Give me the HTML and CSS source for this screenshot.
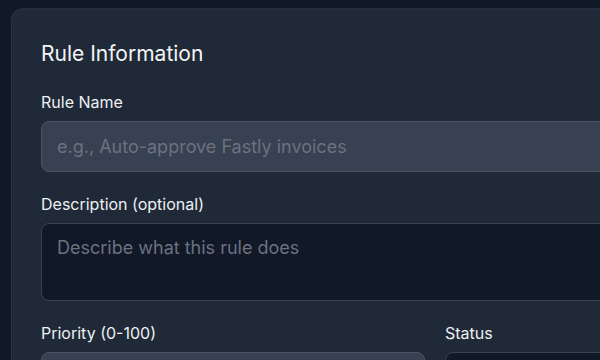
FILE: index.html
```html
<!DOCTYPE html>
<html>

<head>
    <title>Rule editor</title>
    <link rel="stylesheet" href="styles.css">
</head>

<body>
    <div class="card">
        <h2 class="card-title">Rule Information</h2>

        <div class="field">
            <label for="rule-name">Rule Name</label>
            <input class="text-input" type="text" id="rule-name" placeholder="e.g., Auto-approve Fastly invoices">
        </div>

        <div class="field">
            <label for="rule-desc">Description (optional)</label>
            <textarea class="text-area" id="rule-desc" placeholder="Describe what this rule does"></textarea>
        </div>

        <div class="row">
            <div class="field">
                <label for="priority">Priority (0-100)</label>
                <input class="text-input" type="number" id="priority">
            </div>
            <div class="field">
                <label for="status">Status</label>
                <select class="select-input" id="status"></select>
            </div>
        </div>
    </div>
</body>

</html>
```

FILE: styles.css
```css
html,
body {
    margin: 0;
    height: 100%;
    overflow: hidden;
}

body {
    background-color: #111827;
    font-family: Inter, "Noto Sans", sans-serif;
    color: #e5e7eb;
    padding: 8px 0 0 11px;
    box-sizing: border-box;
}

.card {
    width: 848px;
    height: 600px;
    box-sizing: border-box;
    background-color: #1f2937;
    border: 1px solid #2b3446;
    border-top: 2px solid #262d40;
    border-radius: 12px;
    padding: 30px 29px;
}

.card-title {
    margin: 0 0 24px 0;
    font-size: 21px;
    line-height: 28px;
    font-weight: 400;
    color: #f3f4f6;
}

.field {
    display: flex;
    flex-direction: column;
    margin-bottom: 22px;
}

.field label {
    font-size: 16px;
    line-height: 20px;
    margin-bottom: 9px;
    color: #eef0f3;
}

.text-input,
.text-area,
.select-input {
    box-sizing: border-box;
    width: 100%;
    font-family: inherit;
    font-size: 18px;
    color: #e5e7eb;
    border-radius: 8px;
    padding: 0 15px;
    outline: none;
}

.text-input {
    height: 51px;
    background-color: #374151;
    border: 1px solid #4b5563;
}

.text-area {
    height: 78px;
    padding-top: 13px;
    resize: none;
    background-color: #111827;
    border: 1px solid #374151;
}

.select-input {
    height: 51px;
    background-color: #111827;
    border: 1px solid #374151;
    appearance: none;
}

.text-input::placeholder,
.text-area::placeholder {
    color: #6b7280;
}

.row {
    display: grid;
    grid-template-columns: 1fr 1fr;
    column-gap: 20px;
}
```
